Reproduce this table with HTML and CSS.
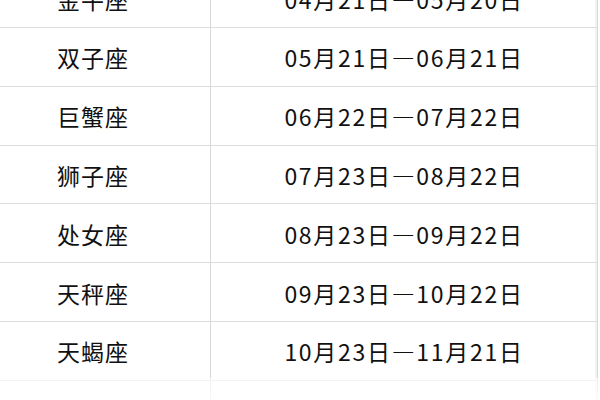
FILE: index.html
```html
<!DOCTYPE html>
<html lang="zh">
<head>
<meta charset="utf-8">
<link rel="stylesheet" href="styles.css">
</head>
<body>
<div class="page">
  <div class="table">
    <div class="row"><div class="cell name">金牛座</div><div class="cell date">04月21日—05月20日</div></div>
    <div class="row"><div class="cell name">双子座</div><div class="cell date">05月21日—06月21日</div></div>
    <div class="row"><div class="cell name">巨蟹座</div><div class="cell date">06月22日—07月22日</div></div>
    <div class="row"><div class="cell name">狮子座</div><div class="cell date">07月23日—08月22日</div></div>
    <div class="row"><div class="cell name">处女座</div><div class="cell date">08月23日—09月22日</div></div>
    <div class="row"><div class="cell name">天秤座</div><div class="cell date">09月23日—10月22日</div></div>
    <div class="row"><div class="cell name">天蝎座</div><div class="cell date">10月23日—11月21日</div></div>
    <div class="row"><div class="cell name">射手座</div><div class="cell date">11月22日—12月21日</div></div>
  </div>
  <div class="fade"></div>
</div>
</body>
</html>
```
FILE: styles.css
```css
html, body {
  margin: 0;
  padding: 0;
  background: #fff;
}
.page {
  position: relative;
  width: 600px;
  height: 400px;
  overflow: hidden;
}
.table {
  margin-top: -30.8px;
  margin-left: -24px;
  width: 621px;
  display: flex;
  flex-direction: column;
  border-right: 1px solid #c9dfe3;
  box-shadow: inset -2px 0 0 #eef4f5;
}
.row {
  display: grid;
  grid-template-columns: 235px 1fr;
  height: 58.8px;
  box-sizing: border-box;
  border-bottom: 1px solid #dcdede;
}
.cell {
  display: flex;
  align-items: center;
  justify-content: center;
  padding-top: 1px;
  font-family: "Noto Sans CJK SC", sans-serif;
  font-size: 23px;
  font-weight: 400;
  color: #111;
}
.name {
  border-right: 1px solid #d8d8d8;
  letter-spacing: 1px;
}
.date {
  letter-spacing: 1.7px;
}
.fade {
  position: absolute;
  left: 0;
  right: 0;
  bottom: 0;
  height: 22px;
  background: linear-gradient(to bottom, rgba(255,255,255,0.6), rgba(255,255,255,0.85));
}
```
